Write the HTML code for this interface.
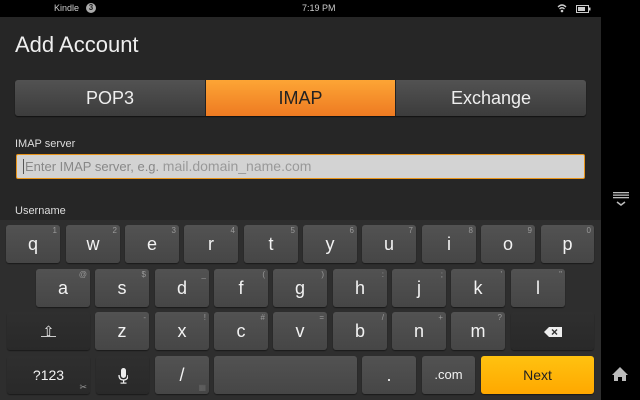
<!DOCTYPE html>
<html><head><style>
*{margin:0;padding:0;box-sizing:border-box}
body{width:640px;height:400px;background:#000;position:relative;overflow:hidden;font-family:"Liberation Sans",sans-serif;color:#eee}
.a{position:absolute}
.k{position:absolute;background:linear-gradient(#525252,#464646);border-radius:3px;box-shadow:0 1px 1px #1a1a1a;color:#f2f2f2;font-size:18px;text-align:center;line-height:38px;height:38px}
.d{background:linear-gradient(#2f2f2f,#292929)}
.s{position:absolute;right:3px;top:1px;font-size:8px;line-height:9px;color:#999}
</style></head><body>
<div class="a" style="left:0;top:0;width:640px;height:17px;background:#000"></div>
<div class="a" style="left:54px;top:3px;font-size:9px;color:#ccc">Kindle</div>
<div class="a" style="left:86px;top:3px;width:10px;height:10px;border-radius:50%;background:#aaa;color:#222;font-size:8px;text-align:center;line-height:10px;font-weight:bold">3</div>
<div class="a" style="left:302px;top:3px;font-size:9px;color:#ccc">7:19 PM</div>
<svg class="a" style="left:556px;top:3px" width="36" height="11"><path d="M2 4 Q6 0 10 4 M3.5 6 Q6 3.5 8.5 6" stroke="#ccc" fill="none" stroke-width="1.3"/><circle cx="6" cy="8" r="1.3" fill="#ccc"/><rect x="20.5" y="2.5" width="12" height="7" fill="none" stroke="#ccc"/><rect x="22" y="4" width="7" height="4" fill="#ccc"/><rect x="33" y="4.5" width="1.5" height="3" fill="#ccc"/></svg>
<div class="a" style="left:0;top:17px;width:601px;height:203px;background:#262626"></div>
<div class="a" style="left:15px;top:32px;font-size:22px;color:#eee">Add Account</div>
<div class="a" style="left:15px;top:80px;width:571px;height:36px;border-radius:3px;background:linear-gradient(#525252,#3c3c3c);box-shadow:0 1px 1px #111"></div>
<div class="a" style="left:15px;top:80px;width:190px;height:36px;text-align:center;line-height:36px;font-size:18px">POP3</div>
<div class="a" style="left:206px;top:80px;width:189px;height:36px;background:linear-gradient(#fda535,#ee7a22);text-align:center;line-height:36px;font-size:18px;color:#222">IMAP</div>
<div class="a" style="left:205px;top:80px;width:1px;height:36px;background:#222"></div>
<div class="a" style="left:395px;top:80px;width:1px;height:36px;background:#222"></div>
<div class="a" style="left:396px;top:80px;width:190px;height:36px;text-align:center;line-height:36px;font-size:18px">Exchange</div>
<div class="a" style="left:15px;top:138px;font-size:11px;color:#ddd">IMAP server</div>
<div class="a" style="left:16px;top:154px;width:569px;height:25px;background:#d3d3d3;border:1px solid #e8941a;border-radius:2px;font-size:13px;line-height:23px;padding-left:6px;color:#888"><span style="border-left:1px solid #555;padding-left:1px">Enter IMAP server, e.g.</span> <span style="font-size:14px;color:#999">mail.domain_name.com</span></div>
<div class="a" style="left:15px;top:205px;font-size:11px;color:#ddd">Username</div>
<div class="a" style="left:0;top:220px;width:601px;height:180px;background:#2e2e2e"></div>
<svg class="a" style="left:612px;top:192px" width="18" height="16"><g fill="#bbb"><rect x="1" y="0" width="16" height="1.3"/><rect x="1" y="2.5" width="16" height="1.3"/><rect x="1" y="5" width="16" height="1.3"/></g><path d="M5 10 L9 13 L13 10" stroke="#bbb" fill="none" stroke-width="1.5"/></svg>
<svg class="a" style="left:611px;top:366px" width="18" height="16"><path d="M9 1 L1 9 L3 9 L3 15 L7 15 L7 11 L11 11 L11 15 L15 15 L15 9 L17 9 Z" fill="#bbb"/></svg>

<div class="k" style="left:6px;top:225px;width:54px">q<span class="s">1</span></div>
<div class="k" style="left:66px;top:225px;width:54px">w<span class="s">2</span></div>
<div class="k" style="left:125px;top:225px;width:54px">e<span class="s">3</span></div>
<div class="k" style="left:184px;top:225px;width:54px">r<span class="s">4</span></div>
<div class="k" style="left:244px;top:225px;width:54px">t<span class="s">5</span></div>
<div class="k" style="left:303px;top:225px;width:54px">y<span class="s">6</span></div>
<div class="k" style="left:362px;top:225px;width:54px">u<span class="s">7</span></div>
<div class="k" style="left:422px;top:225px;width:54px">i<span class="s">8</span></div>
<div class="k" style="left:481px;top:225px;width:54px">o<span class="s">9</span></div>
<div class="k" style="left:541px;top:225px;width:53px">p<span class="s">0</span></div>

<div class="k" style="left:36px;top:269px;width:54px">a<span class="s">@</span></div>
<div class="k" style="left:95px;top:269px;width:54px">s<span class="s">$</span></div>
<div class="k" style="left:155px;top:269px;width:54px">d<span class="s">_</span></div>
<div class="k" style="left:214px;top:269px;width:54px">f<span class="s">(</span></div>
<div class="k" style="left:273px;top:269px;width:54px">g<span class="s">)</span></div>
<div class="k" style="left:333px;top:269px;width:54px">h<span class="s">:</span></div>
<div class="k" style="left:392px;top:269px;width:54px">j<span class="s">;</span></div>
<div class="k" style="left:451px;top:269px;width:54px">k<span class="s">'</span></div>
<div class="k" style="left:511px;top:269px;width:54px">l<span class="s">"</span></div>

<div class="k d" style="left:7px;top:312px;width:83px;font-size:14px">&#8679;</div>
<div class="a" style="left:41px;top:336px;width:15px;height:1px;background:#ccc"></div>
<div class="k" style="left:95px;top:312px;width:54px">z<span class="s">-</span></div>
<div class="k" style="left:155px;top:312px;width:54px">x<span class="s">!</span></div>
<div class="k" style="left:214px;top:312px;width:54px">c<span class="s">#</span></div>
<div class="k" style="left:273px;top:312px;width:54px">v<span class="s">=</span></div>
<div class="k" style="left:333px;top:312px;width:54px">b<span class="s">/</span></div>
<div class="k" style="left:392px;top:312px;width:54px">n<span class="s">+</span></div>
<div class="k" style="left:451px;top:312px;width:54px">m<span class="s">?</span></div>
<div class="k d" style="left:511px;top:312px;width:83px"><svg width="20" height="12" style="vertical-align:middle"><path d="M1 6 L6 1 L19 1 L19 11 L6 11 Z" fill="#eee"/><path d="M9 3.5 L14 8.5 M14 3.5 L9 8.5" stroke="#333" stroke-width="1.4"/></svg></div>

<div class="k d" style="left:7px;top:356px;width:83px;font-size:14px">?123<span class="s" style="top:auto;bottom:2px;font-size:9px">&#9986;</span></div>
<div class="k d" style="left:96px;top:356px;width:53px"><svg width="10" height="16" style="vertical-align:middle"><rect x="3" y="0" width="5" height="10" rx="2.5" fill="#eee"/><path d="M1 7 Q1 12 5.5 12 Q10 12 10 7" stroke="#eee" fill="none" stroke-width="1.3"/><rect x="5" y="12" width="1.2" height="3" fill="#eee"/><rect x="2.5" y="14.5" width="6" height="1.2" fill="#eee"/></svg></div>
<div class="k" style="left:155px;top:356px;width:54px">/<span class="s" style="top:auto;bottom:2px;color:#666">&#9638;</span></div>
<div class="k" style="left:214px;top:356px;width:143px"></div>
<div class="k" style="left:362px;top:356px;width:54px">.</div>
<div class="k" style="left:422px;top:356px;width:53px;font-size:13px">.com</div>
<div class="k" style="left:481px;top:356px;width:113px;background:linear-gradient(#ffc210,#ffa800);color:#222;font-size:14px">Next</div>
</body></html>
